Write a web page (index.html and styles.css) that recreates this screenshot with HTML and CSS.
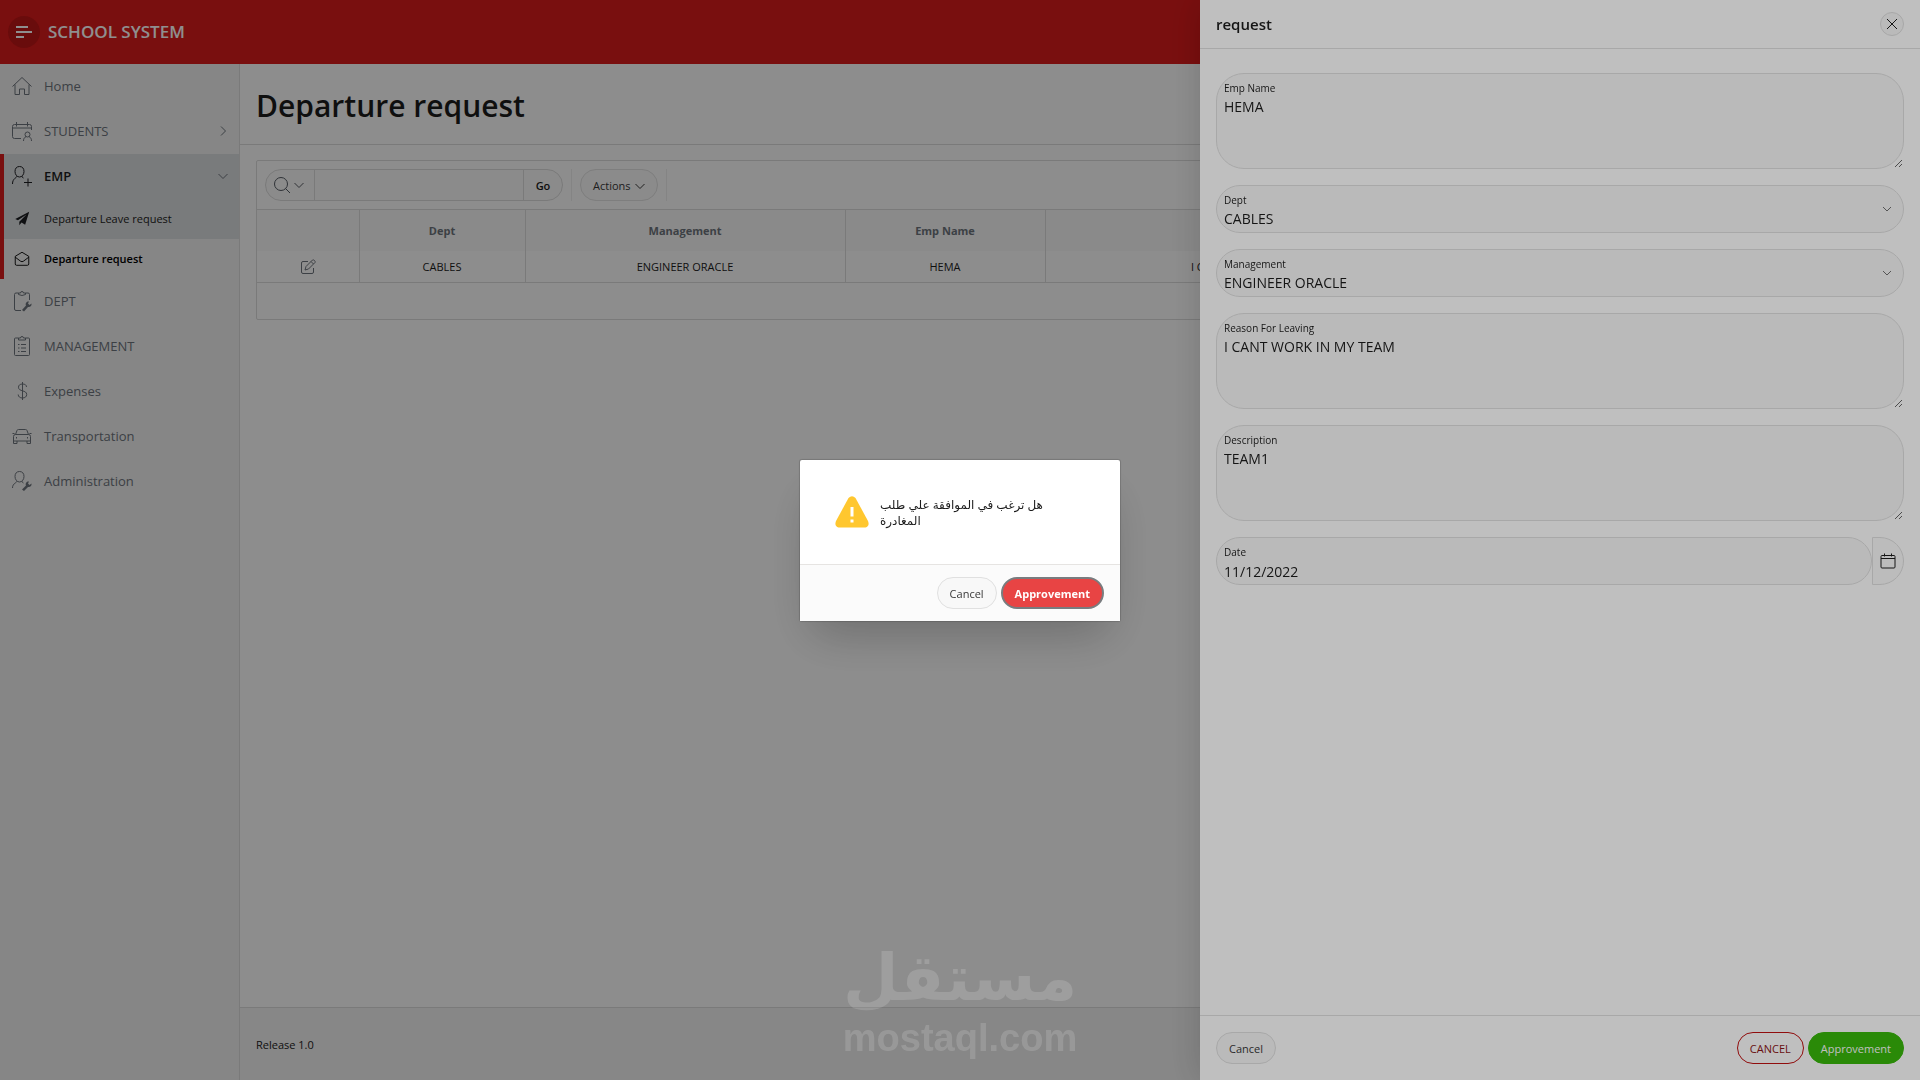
FILE: index.html
```html
<!DOCTYPE html>
<html lang="en">

<head>
    <meta charset="UTF-8">
    <meta name="viewport" content="width=device-width, initial-scale=1">
    <title>Departure request</title>
    <link rel="stylesheet" href="styles.css">
</head>

<body>
    <header class="header">
        <button class="menu-toggle" type="button" aria-label="Main navigation">
            <svg width="16" height="12" viewBox="0 0 16 12"><path d="M0 1h12M0 6h16M0 11h8" /></svg>
        </button>
        <a class="brand" href="#">SCHOOL SYSTEM</a>
    </header>

    <div class="body">
        <nav class="sidebar">
            <a class="nav-item" href="#">
                <svg class="icon" viewBox="0 0 20 20"><path d="M.5 10.5 10 1.5l9.500 9M3 8.500v10h4.500v-5.500h5v5.500h4.500v-10" /></svg>
                <span>Home</span>
            </a>
            <a class="nav-item" href="#">
                <svg class="icon" viewBox="0 0 20 20"><path d="M9 17.500H2.500a2 2 0 0 1-2-2v-10a2 2 0 0 1 2-2h15a2 2 0 0 1 2 2V9M.5 7h19M4.500 1v4.500M15.500 1v4.500" /><circle cx="15.500" cy="13.500" r="2.500" /><path d="M11.500 20c0-2.500 1-3.500 2.500-4.500M19.500 20c0-2.500-1-3.500-2.500-4.500" /></svg>
                <span>STUDENTS</span>
                <svg class="chevron" viewBox="0 0 10 10"><path d="M3 .5 7.500 5 3 9.500" /></svg>
            </a>
            <div class="nav-group">
                <a class="nav-item nav-parent" href="#">
                    <svg class="icon" viewBox="0 0 20 20"><path d="M7.500.5c-3 0-4.500 2-4.500 5s2 5.500 4.500 5.500S12 8.500 12 5.500 10.500.5 7.500.5zM5 10c0 2-4.500 2-4.500 8M10 10c0 1.500.5 1.500 1.500 2M16 12.500v8M12 16.500h8" /></svg>
                    <span>EMP</span>
                    <svg class="chevron" viewBox="0 0 10 10"><path d="M.5 3 5 7.500 9.500 3" /></svg>
                </a>
                <a class="nav-item nav-sub" href="#">
                    <svg class="icon" viewBox="0 0 20 20"><path class="solid" d="M18 2 2.500 10l3 1.500L15 5 7 13v4l2.500-3 4 2.500z" /></svg>
                    <span>Departure Leave request</span>
                </a>
                <a class="nav-item nav-sub current" href="#">
                    <svg class="icon" viewBox="0 0 20 20"><path d="M2.500 7 10 2.500 17.500 7v8.500a1.500 1.500 0 0 1-1.500 1.500H4a1.500 1.500 0 0 1-1.500-1.500zM2.500 8l6 4.500q1.500 1 3 0l6-4.500" /></svg>
                    <span>Departure request</span>
                </a>
            </div>
            <a class="nav-item" href="#">
                <svg class="icon" viewBox="0 0 20 20"><path d="M9 19.500H4a1.500 1.500 0 0 1-1.500-1.500V3.500A1.500 1.500 0 0 1 4 2h2.500M13.500 2H16a1.500 1.500 0 0 1 1.500 1.500V9M6.500 3.500V2H8.500a1.500 1.500 0 0 1 3 0h2v1.500q-3.500 2-7 0" /><path class="solid" d="m10 19 4-4.500c-1-2.500 1-4.500 3-4l-1 2 1.500 1.500 2-1.500c.5 2.500-1.500 4-3.500 3.500L12 20.500z" /></svg>
                <span>DEPT</span>
            </a>
            <a class="nav-item" href="#">
                <svg class="icon" viewBox="0 0 20 20"><path d="M6.500 2H3.500a1 1 0 0 0-1 1v15.500a1 1 0 0 0 1 1h13a1 1 0 0 0 1-1V3a1 1 0 0 0-1-1h-3M6.500 4V2H8.500a1.500 1.500 0 0 1 3 0h2v2zM6 8.500h1.500M9 8.500h5M6 12h1.500M9 12h5M6 15.500h1.500M9 15.500h5" /></svg>
                <span>MANAGEMENT</span>
            </a>
            <a class="nav-item" href="#">
                <svg class="icon" viewBox="0 0 20 20"><path d="M10.500 1v18M14.500 6c0-2-1.500-3-4-3s-4 1.200-4 3.200c0 4.800 8.200 2.500 8.200 7.300 0 2.200-1.700 3.500-4.200 3.500s-4.300-1.300-4.300-3.500" /></svg>
                <span>Expenses</span>
            </a>
            <a class="nav-item" href="#">
                <svg class="icon" viewBox="0 0 20 20"><path d="M3.500 8.500 5 4.500a1.500 1.500 0 0 1 1.500-1h7a1.500 1.500 0 0 1 1.500 1l1.500 4M.5 7.500h2M17.500 7.500h2M1.500 15v-4.500a2 2 0 0 1 2-2h13a2 2 0 0 1 2 2V15zM1.500 15v2.500h3.500V15M15 15v2.500h3.500V15M4.500 11v1.500M15.500 11v1.500" /></svg>
                <span>Transportation</span>
            </a>
            <a class="nav-item" href="#">
                <svg class="icon" viewBox="0 0 20 20"><path d="M7.500.5c-3 0-4.500 2-4.500 5s2 5.500 4.500 5.500S12 8.500 12 5.500 10.500.5 7.500.5zM5 10c0 2-4.500 2-4.500 7M10 10c0 1.500.5 1.500 1.500 2" /><path class="solid" d="m10 18.500 4-4c-1-2.500 1-4.500 3-4l-1 2 1.500 1.500 2-1.500c.5 2.500-1.500 4-3.500 3.500l-4 4z" /></svg>
                <span>Administration</span>
            </a>
        </nav>

        <main class="main">
            <div class="title-bar">
                <h1>Departure request</h1>
            </div>

            <section class="report">
                <div class="toolbar">
                    <div class="search">
                        <button class="search-columns" type="button" aria-label="Select columns to search">
                            <svg width="18" height="18" viewBox="0 0 18 18"><circle cx="8" cy="8" r="6.500" /><path d="m12.500 12.500 4.500 4.500" /></svg>
                            <svg class="chevron" viewBox="0 0 10 10"><path d="M.5 3 5 7.500 9.500 3" /></svg>
                        </button>
                        <input class="search-text" type="text" aria-label="Search report">
                        <button class="search-go" type="button">Go</button>
                    </div>
                    <div class="actions">
                        <button class="btn" type="button">Actions
                            <svg class="chevron" viewBox="0 0 10 10"><path d="M.5 3 5 7.500 9.500 3" /></svg>
                        </button>
                    </div>
                </div>
                <table class="grid">
                    <colgroup>
                        <col class="col-edit">
                        <col class="col-dept">
                        <col class="col-management">
                        <col class="col-name">
                        <col class="col-reason">
                        <col>
                    </colgroup>
                    <thead>
                        <tr>
                            <th></th>
                            <th>Dept</th>
                            <th>Management</th>
                            <th>Emp Name</th>
                            <th>Reason For Leaving</th>
                            <th>Description</th>
                        </tr>
                    </thead>
                    <tbody>
                        <tr>
                            <td>
                                <a class="edit" href="#" aria-label="Edit">
                                    <svg width="16" height="16" viewBox="0 0 16 16"><path d="M8 2.500H3A1.500 1.500 0 0 0 1.500 4v9A1.500 1.500 0 0 0 3 14.500h9a1.500 1.500 0 0 0 1.500-1.500V9M5 11l1-3.500L12.500 1q1-.5 2 .5t.5 2L8.500 10zM11 2.500 13.500 5" /></svg>
                                </a>
                            </td>
                            <td>CABLES</td>
                            <td>ENGINEER ORACLE</td>
                            <td>HEMA</td>
                            <td>I CANT WORK IN MY TEAM</td>
                            <td>TEAM1</td>
                        </tr>
                    </tbody>
                </table>
            </section>

            <footer class="footer">Release 1.0</footer>
        </main>
    </div>

    <div class="overlay"></div>

    <aside class="drawer">
        <div class="drawer-header">
            <h2>request</h2>
            <button class="close" type="button" aria-label="Close">
                <svg width="12" height="12" viewBox="0 0 12 12"><path d="m1 1 10 10M11 1 1 11" /></svg>
            </button>
        </div>
        <form class="drawer-body">
            <div class="field">
                <label for="emp-name">Emp Name</label>
                <textarea id="emp-name">HEMA</textarea>
            </div>
            <div class="field">
                <label for="dept">Dept</label>
                <select id="dept">
                    <option>CABLES</option>
                </select>
                <svg class="chevron" viewBox="0 0 10 10"><path d="M1 3 5 7 9 3" /></svg>
            </div>
            <div class="field">
                <label for="management">Management</label>
                <select id="management">
                    <option>ENGINEER ORACLE</option>
                </select>
                <svg class="chevron" viewBox="0 0 10 10"><path d="M1 3 5 7 9 3" /></svg>
            </div>
            <div class="field">
                <label for="reason">Reason For Leaving</label>
                <textarea id="reason">I CANT WORK IN MY TEAM</textarea>
            </div>
            <div class="field">
                <label for="description">Description</label>
                <textarea id="description">TEAM1</textarea>
            </div>
            <div class="field">
                <label for="date">Date</label>
                <input id="date" type="text" value="11/12/2022">
                <button class="date-picker" type="button" aria-label="Open calendar">
                    <svg width="16" height="16" viewBox="0 0 16 16"><path d="M2 2.500h12a1 1 0 0 1 1 1V14a1 1 0 0 1-1 1H2a1 1 0 0 1-1-1V3.500a1 1 0 0 1 1-1zM1 5.500h14M4.500.5v3M11.500.5v3" /></svg>
                </button>
            </div>
        </form>
        <div class="drawer-footer">
            <button class="btn" type="button">Cancel</button>
            <button class="btn btn-danger" type="button">CANCEL</button>
            <button class="btn btn-success" type="button">Approvement</button>
        </div>
    </aside>

    <div class="modal-layer">
        <div class="dialog" role="alertdialog" aria-describedby="dialog-text">
            <div class="dialog-body">
                <svg width="34" height="32" viewBox="0 0 34 32"><path class="warning" d="M13.500 2Q17-1.500 20.500 2L33 25q2 5-2.500 6.500h-27Q-1 30 1 25z" /><path class="warning-mark" d="M17 11v9.500M17 23.500v3" /></svg>
                <p id="dialog-text" lang="ar">هل ترغب في الموافقة علي طلب<br>المغادرة</p>
            </div>
            <div class="dialog-footer">
                <button class="btn" type="button">Cancel</button>
                <button class="btn btn-hot" type="button">Approvement</button>
            </div>
        </div>
    </div>

    <div class="watermark">
        <span class="watermark-name" lang="ar">مستقل</span>
        <span class="watermark-site">mostaql.com</span>
    </div>
</body>

</html>
```

FILE: styles.css
```css
* {
    box-sizing: border-box;
}

body {
    margin: 0;
    height: 100vh;
    display: flex;
    flex-direction: column;
    overflow: hidden;
    font-family: "Open Sans", "Noto Sans", sans-serif;
    font-size: 11px;
    line-height: 16px;
    color: #1c1c1c;
    background-color: #fcfcfc;
}

button,
input,
select,
textarea {
    font: inherit;
    color: inherit;
}

button {
    cursor: pointer;
}

a {
    color: inherit;
    text-decoration: none;
}

svg {
    flex: none;
    fill: none;
    stroke: currentColor;
}

.chevron {
    width: 10px;
    height: 10px;
}

/* header */

.header {
    flex: none;
    display: flex;
    align-items: center;
    gap: 8px;
    height: 64px;
    padding: 0 8px;
    background-color: #d91b1b;
    color: #fff;
}

.menu-toggle {
    display: flex;
    align-items: center;
    justify-content: center;
    width: 32px;
    height: 32px;
    padding: 0;
    border: none;
    border-radius: 50%;
    background-color: #bd1616;
}

.menu-toggle svg {
    stroke-width: 2;
}

.brand {
    font-size: 17px;
    line-height: 24px;
    font-weight: 600;
}

.body {
    flex: 1;
    display: flex;
    min-height: 0;
}

/* navigation */

.sidebar {
    flex: none;
    width: 240px;
    border-right: 1px solid #dadada;
    background-color: #efefef;
    color: #6d737b;
}

.nav-item {
    display: flex;
    align-items: center;
    gap: 12px;
    height: 45px;
    padding: 0 11px 2px 12px;
    font-size: 13px;
}

.nav-item span {
    flex: 1;
}

.icon {
    width: 20px;
    height: 20px;
    overflow: visible;
}

.solid {
    fill: currentColor;
    stroke: none;
}

.nav-group {
    box-shadow: inset 4px 0 #d91b1b;
    background-color: #d9dbde;
    color: #1c1e21;
}

.nav-parent {
    font-weight: 600;
}

.nav-parent .chevron {
    color: #6d737b;
}

.nav-sub {
    height: 40px;
    padding-bottom: 0;
    font-size: 11px;
}

.nav-sub .icon {
    width: 18px;
    height: 18px;
    margin: 0 1px;
}

.nav-group .current {
    margin-left: 4px;
    padding-left: 8px;
    background-color: #efefef;
    color: #000;
    font-weight: 600;
}

/* page */

.main {
    flex: 1;
    display: flex;
    flex-direction: column;
    min-width: 0;
}

.title-bar {
    padding: 22px 16px 18px;
    border-bottom: 1px solid #dadada;
}

h1 {
    margin: 0;
    font-size: 30px;
    line-height: 40px;
    font-weight: 600;
}

.report {
    margin: 15px 16px;
    padding-bottom: 36px;
    border: 1px solid #dadada;
    border-radius: 2px;
}

.toolbar {
    display: flex;
    gap: 8px;
    padding: 8px;
}

.search {
    display: flex;
    height: 32px;
    border: 1px solid #dadada;
    border-radius: 16px;
    overflow: hidden;
    background-color: #f8f8f8;
}

.search-columns {
    display: flex;
    align-items: center;
    gap: 3px;
    width: 48px;
    padding: 0 0 0 7px;
    border: none;
    background: none;
    color: #555b63;
}

.search-text {
    width: 210px;
    border: solid #dadada;
    border-width: 0 1px;
    background: none;
}

.search-go {
    width: 38px;
    padding: 2px 0 0;
    border: none;
    background: none;
    font-weight: 600;
}

.actions {
    padding: 0 8px;
    border: solid #ececec;
    border-width: 0 1px;
}

.btn {
    display: inline-flex;
    align-items: center;
    gap: 4px;
    height: 32px;
    padding: 2px 12px 0;
    border: 1px solid #e0e0e0;
    border-radius: 16px;
    background-color: #f8f8f8;
    color: #383838;
}

.grid {
    width: 100%;
    table-layout: fixed;
    border-collapse: collapse;
    text-align: center;
}

.grid th,
.grid td {
    padding: 1px 0 0;
    border: solid #dadada;
    border-width: 0 1px;
}

.grid th {
    height: 41px;
    border-top-width: 1px;
    background-color: #f6f6f6;
    color: #6d737b;
    font-weight: 700;
}

.grid td {
    height: 32px;
    border-bottom-width: 1px;
}

.grid th:first-child,
.grid td:first-child {
    border-left: none;
}

.grid th:last-child,
.grid td:last-child {
    border-right: none;
}

.col-edit {
    width: 102px;
}

.col-dept {
    width: 166px;
}

.col-management {
    width: 320px;
}

.col-name {
    width: 200px;
}

.col-reason {
    width: 426px;
}

.edit {
    display: flex;
    justify-content: center;
    color: #6d737b;
}

.footer {
    margin-top: auto;
    padding: 29px 16px 27px;
    border-top: 1px solid #dadada;
    background-color: #f0f0f0;
}

/* drawer */

.overlay {
    position: fixed;
    inset: 0;
    background-color: rgba(0, 0, 0, 0.25);
}

.drawer {
    position: fixed;
    top: 0;
    right: 0;
    bottom: 0;
    display: flex;
    flex-direction: column;
    width: 720px;
    max-width: 100%;
    background-color: #fff;
    box-shadow: 0 0 32px rgba(0, 0, 0, 0.16);
}

.drawer-header {
    display: flex;
    align-items: center;
    justify-content: space-between;
    height: 49px;
    padding: 0 16px;
    border-bottom: 1px solid #e0e0e0;
}

h2 {
    margin: 0;
    font-size: 15px;
    line-height: 24px;
    font-weight: 600;
}

.close {
    display: flex;
    align-items: center;
    justify-content: center;
    width: 24px;
    height: 24px;
    padding: 0;
    border: 1px solid #e0e0e0;
    border-radius: 50%;
    background-color: #f9f9f9;
}

.drawer-body {
    flex: 1;
    display: flex;
    flex-direction: column;
    gap: 16px;
    padding: 24px 16px;
}

/* labels float inside their field */
.field {
    position: relative;
    display: flex;
}

.field label {
    position: absolute;
    top: 7px;
    left: 8px;
    font-size: 10px;
}

.field textarea,
.field select,
.field input {
    flex: 1;
    height: 48px;
    padding: 21px 7px 1px;
    border: 1px solid #e0e0e0;
    border-radius: 24px;
    background-color: #f9f9f9;
    font-size: 14px;
    line-height: 24px;
    appearance: none;
}

.field textarea {
    height: 96px;
    border-radius: 28px;
    resize: vertical;
}

.field .chevron {
    position: absolute;
    top: 19px;
    right: 12px;
    color: #707070;
}

.date-picker {
    display: flex;
    align-items: center;
    justify-content: center;
    width: 32px;
    padding: 0;
    border: 1px solid #e0e0e0;
    border-radius: 0 24px 24px 0;
    background-color: #fbfbfb;
}

.drawer-footer {
    display: flex;
    gap: 4px;
    padding: 16px;
    border-top: 1px solid #e0e0e0;
}

.drawer-footer .btn-danger {
    margin-left: auto;
    border-color: #c01010;
    background-color: #fff;
    color: #8c1414;
}

.btn-success {
    border-color: #38b80b;
    background-color: #38b80b;
    color: #fff;
}

/* confirm dialog */

.modal-layer {
    position: fixed;
    inset: 0;
    display: flex;
    align-items: center;
    justify-content: center;
    background-color: rgba(0, 0, 0, 0.25);
}

.dialog {
    width: 320px;
    border-radius: 2px;
    background-color: #fff;
    box-shadow: 0 0 1px 1px rgba(0, 0, 0, 0.16), 0 24px 48px -12px rgba(0, 0, 0, 0.24);
}

.dialog-body {
    display: flex;
    gap: 11px;
    padding: 36px 35px 35px;
}

.dialog-body p {
    margin: 0;
    padding-top: 1px;
    font-family: "Open Sans", "DejaVu Sans", sans-serif;
    font-size: 12px;
}

.warning {
    fill: #ffc72f;
    stroke: none;
}

.warning-mark {
    stroke: #fff;
    stroke-width: 3;
}

.dialog-footer {
    display: flex;
    justify-content: flex-end;
    gap: 4px;
    padding: 12px 16px;
    border-top: 1px solid #e6e4e2;
    background-color: #fbfbfb;
}

.btn-hot {
    border: 2px solid #797c7f;
    background-color: #e84444;
    color: #fff;
    font-weight: 700;
}

/* watermark */

.watermark {
    position: fixed;
    left: 0;
    right: 0;
    bottom: 20px;
    display: flex;
    flex-direction: column;
    align-items: center;
    color: #fff;
    opacity: 0.15;
    font-weight: 700;
    pointer-events: none;
}

.watermark-name {
    font-family: "DejaVu Sans", sans-serif;
    font-size: 64px;
    line-height: 75px;
}

.watermark-site {
    font-family: "Liberation Sans", sans-serif;
    font-size: 38px;
    line-height: 44px;
}
```
